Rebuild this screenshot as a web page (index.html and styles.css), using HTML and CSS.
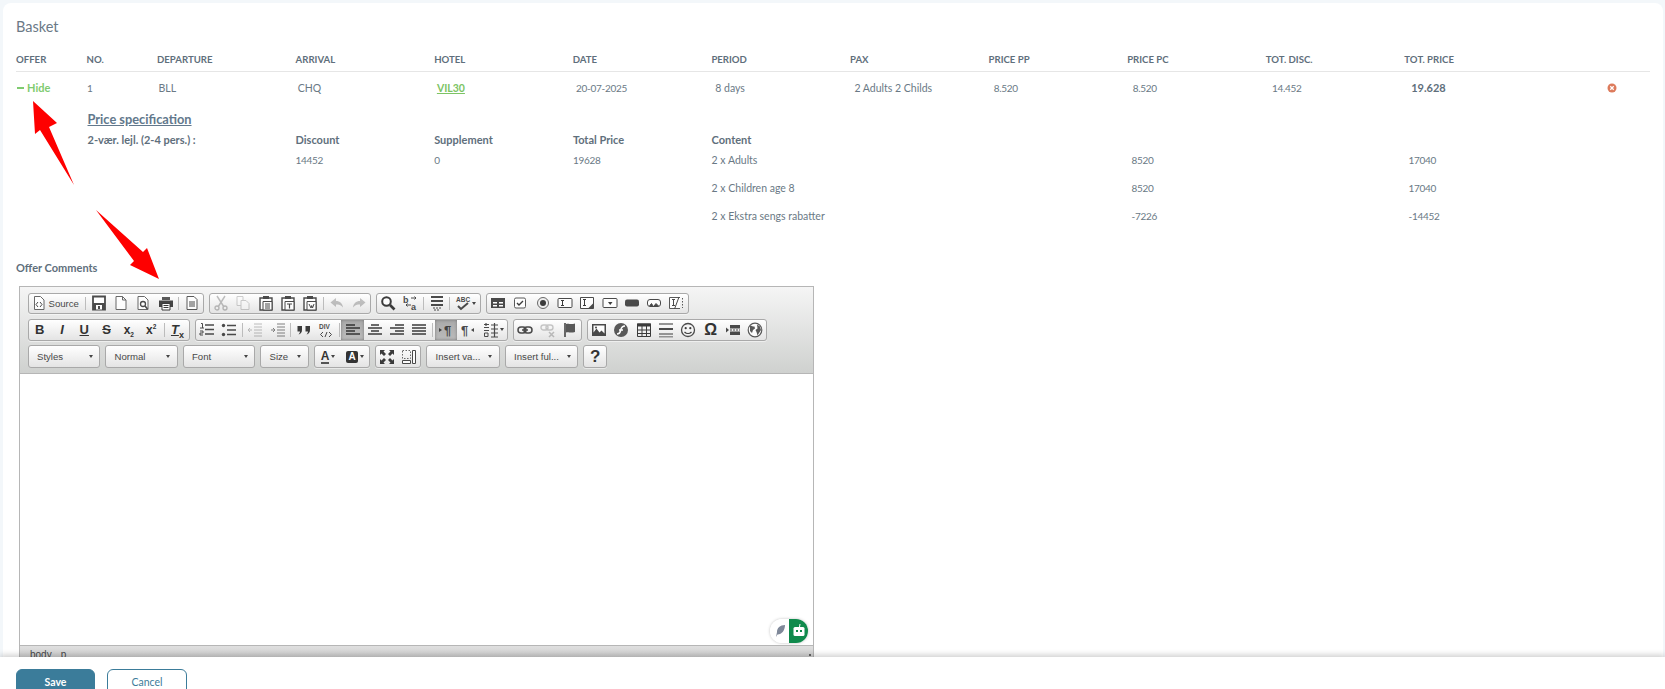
FILE: index.html
```html
<!DOCTYPE html>
<html lang="en">
<head>
  <meta charset="UTF-8" />
  <title>Basket</title>
  <link rel="stylesheet" href="styles.css">
</head>
<body>

  <!-- Icon set for the editor toolbar -->
  <svg class="sprite" xmlns="http://www.w3.org/2000/svg">
    <symbol id="i-source" viewBox="0 0 16 16"><path d="M3.5 1.5h6l3.5 3.5v9.5h-9.5z" fill="#fff" stroke="#555"/><path d="M7 7 5 9.5l2 2.5M9 7l2 2.5L9 12" fill="none" stroke="#333"/></symbol>
    <symbol id="i-save" viewBox="0 0 16 16"><path d="M2 1.5h12v13H2z" fill="#fff" stroke="#333" stroke-width="1.8"/><path d="M2 8h12v6.5H2z" fill="#333"/><path d="M5 10h6v4.5H5z" fill="#fff"/><path d="M7 11h2v3H7z" fill="#333"/></symbol>
    <symbol id="i-new" viewBox="0 0 16 16"><path d="M3 1.5h6.5l3.5 3.5v9.5H3zM9.5 1.5V5H13" fill="#fff" stroke="#555"/></symbol>
    <symbol id="i-preview" viewBox="0 0 16 16"><path d="M3 1.5h6.5L13 5v9.5H3z" fill="#fff" stroke="#555"/><circle cx="8" cy="9" r="2.5" fill="#fff" stroke="#333" stroke-width="1.3"/><path d="m10 11 2.5 3" stroke="#333" stroke-width="1.6"/></symbol>
    <symbol id="i-print" viewBox="0 0 16 16"><path d="M4 2h8v3H4z" fill="#444"/><path d="M1 5.5h14V12H1z" fill="#2c2c2c"/><path d="M4 8.5h8V15H4z" fill="#fff" stroke="#222"/><path d="M5.5 10.5h5M5.5 12.5h5" stroke="#222"/></symbol>
    <symbol id="i-templates" viewBox="0 0 16 16"><path d="M3 1.5h7l3 3v10H3z" fill="#fff" stroke="#444"/><path d="M5 7h6M5 9h6M5 11h6" stroke="#333"/></symbol>
    <symbol id="i-cut" viewBox="0 0 16 16"><path d="M4 1l7 11M12 1 5 12" stroke="#333" stroke-width="1.4"/><circle cx="4" cy="13" r="2" fill="none" stroke="#333" stroke-width="1.3"/><circle cx="12" cy="13" r="2" fill="none" stroke="#333" stroke-width="1.3"/></symbol>
    <symbol id="i-copy" viewBox="0 0 16 16"><path d="M2 1.5h6v9H2z" fill="#fff" stroke="#666"/><path d="M6 5.5h5l3 3v6H6z" fill="#fff" stroke="#666"/></symbol>
    <symbol id="i-paste" viewBox="0 0 16 16"><path d="M2 3h12v12H2z" fill="#fff" stroke="#333" stroke-width="1.4"/><path d="M5 1h6v3H5z" fill="#333"/><path d="M5 6.5h9V15H5z" fill="#fff" stroke="#333"/><path d="M7 9h5M7 11h5M7 13h5" stroke="#333"/></symbol>
    <symbol id="i-pastetext" viewBox="0 0 16 16"><path d="M2 3h12v12H2z" fill="#fff" stroke="#333" stroke-width="1.4"/><path d="M5 1h6v3H5z" fill="#333"/><path d="M5 6.5h9V15H5z" fill="#fff" stroke="#333"/><path d="M7 9h5M9.5 9v4.5" stroke="#333" stroke-width="1.2"/></symbol>
    <symbol id="i-pasteword" viewBox="0 0 16 16"><path d="M2 3h12v12H2z" fill="#fff" stroke="#333" stroke-width="1.4"/><path d="M5 1h6v3H5z" fill="#333"/><path d="M5 6.5h9V15H5z" fill="#fff" stroke="#333"/><path d="m7 9 2 4 .7-2.5.8 2.5 1.5-4" fill="none" stroke="#333"/></symbol>
    <symbol id="i-undo" viewBox="0 0 16 16"><path d="M7 3 1.5 7.5 7 12V9.5c3 0 5 .5 7 3-.5-4-3-6.5-7-6.5z" fill="#444"/></symbol>
    <symbol id="i-redo" viewBox="0 0 16 16"><path d="M9 3l5.5 4.5L9 12V9.5c-3 0-5 .5-7 3 .5-4 3-6.5 7-6.5z" fill="#444"/></symbol>
    <symbol id="i-find" viewBox="0 0 16 16"><circle cx="6.5" cy="6.5" r="4.3" fill="#fff" stroke="#222" stroke-width="2"/><path d="m10 10 4.5 4.5" stroke="#222" stroke-width="2.6"/></symbol>
    <symbol id="i-replace" viewBox="0 0 16 16"><text x="0" y="8" class="ico-txt">b</text><text x="8" y="15" class="ico-txt">a</text><path d="M8 3h5l-1.5-1.5M13 3l-1.5 1.5M8 10H3l1.5-1.5M3 10l1.5 1.5" fill="none" stroke="#333"/></symbol>
    <symbol id="i-selectall" viewBox="0 0 16 16"><path d="M2 1h12v2H2zM2 5h12v2H2zM2 9h12v2H2z" fill="#333"/><path d="M4 13h8M5 15h6" stroke="#333" stroke-dasharray="2 1"/></symbol>
    <symbol id="i-spell" viewBox="0 0 16 16"><text x="1" y="7" class="ico-txt-s">ABC</text><path d="m3 11 3 3 7-6" fill="none" stroke="#333" stroke-width="2"/></symbol>
    <symbol id="i-form" viewBox="0 0 16 16"><path d="M1 3h14v10H1z" fill="#333"/><path d="M3 7h4v1.5H3zM9 7h4v1.5H9zM3 10h4v1.5H3zM9 10h4v1.5H9z" fill="#fff"/></symbol>
    <symbol id="i-checkbox" viewBox="0 0 16 16"><rect x="2.5" y="3" width="11" height="10" rx="1.5" fill="#fff" stroke="#444"/><path d="m5 8 2 2 4-4" fill="none" stroke="#222" stroke-width="1.4"/></symbol>
    <symbol id="i-radio" viewBox="0 0 16 16"><circle cx="8" cy="8" r="5.5" fill="#eee" stroke="#555"/><circle cx="8" cy="8" r="3" fill="#222"/></symbol>
    <symbol id="i-textfield" viewBox="0 0 16 16"><rect x="1" y="3.5" width="14" height="9" rx="1" fill="#fff" stroke="#333"/><path d="M4 5.5h3M4 10.5h3M5.5 5.5v5" stroke="#222"/></symbol>
    <symbol id="i-textarea" viewBox="0 0 16 16"><path d="M1.5 2.5h13v11h-13z" fill="#fff" stroke="#333"/><path d="M4 4.5h3M4 10.5h3M5.5 4.5v6" stroke="#222"/><path d="m9 13.5 5.5-5.5v5.5z" fill="#333"/></symbol>
    <symbol id="i-select" viewBox="0 0 16 16"><rect x="1" y="3.5" width="14" height="9" rx="1" fill="#fff" stroke="#333"/><path d="M6 7h4.5l-2.250 3z" fill="#222"/></symbol>
    <symbol id="i-button" viewBox="0 0 16 16"><rect x="1" y="4.5" width="14" height="7" rx="2" fill="#333"/></symbol>
    <symbol id="i-imgbutton" viewBox="0 0 16 16"><rect x="1.5" y="4.5" width="13" height="7" rx="2.5" fill="#fff" stroke="#333"/><path d="M3.5 11 5.5 8.5 7 11M8 11l2-2.5 2.5 2.5" fill="#333" stroke="#333"/></symbol>
    <symbol id="i-hidden" viewBox="0 0 16 16"><path d="M12 2.5H1.5v11H12" fill="#fff" stroke="#444"/><path d="M4 4.5h3M4 10.5h3M5.5 4.5v6M11 2 6.5 14" fill="none" stroke="#333"/><path d="M14.5 3v10" stroke="#444" stroke-dasharray="1.5 1.5"/></symbol>
    <symbol id="i-ol" viewBox="0 0 16 16"><path d="M6 3h9M6 7.5h9M6 12h9" stroke="#333" stroke-width="1.5"/><path d="M2 1.5h1.5V6M1 6h4M1 9h3v2H1v2h3" fill="none" stroke="#333"/></symbol>
    <symbol id="i-ul" viewBox="0 0 16 16"><path d="M6 3.5h9M6 8h9M6 12.5h9" stroke="#333" stroke-width="1.5"/><circle cx="2.5" cy="3.5" r="1.7" fill="#333"/><circle cx="2.5" cy="12.5" r="1.7" fill="#333"/></symbol>
    <symbol id="i-outdent" viewBox="0 0 16 16"><path d="M7 2h8M7 5h8M7 8h8M7 11h8M7 14h8" stroke="#333"/><path d="M1 8h4M3 6 1 8l2 2" fill="none" stroke="#333"/></symbol>
    <symbol id="i-indent" viewBox="0 0 16 16"><path d="M7 2h8M7 5h8M7 8h8M7 11h8M7 14h8" stroke="#333"/><path d="M1 8h4M3 6l2 2-2 2" fill="none" stroke="#333"/></symbol>
    <symbol id="i-quote" viewBox="0 0 16 16"><path d="M1.5 4H6v4c0 2.5-1.5 4-3.500 4.500 1-1 1.500-2 1.500-3H1.500zM9.500 4H14v4c0 2.500-1.500 4-3.500 4.500 1-1 1.500-2 1.500-3H9.500z" fill="#222"/></symbol>
    <symbol id="i-div" viewBox="0 0 16 16"><text x="1" y="7" class="ico-txt-s">DIV</text><path d="M5 10 2.5 12.5 5 15M11 10l2.5 2.5L11 15M9 10l-2 5" fill="none" stroke="#333"/></symbol>
    <symbol id="i-left" viewBox="0 0 16 16"><path d="M1 3h9M1 6h14M1 9h9M1 12h14" stroke="#222" stroke-width="1.5"/></symbol>
    <symbol id="i-center" viewBox="0 0 16 16"><path d="M4 3h8M1 6h14M4 9h8M1 12h14" stroke="#222" stroke-width="1.5"/></symbol>
    <symbol id="i-right" viewBox="0 0 16 16"><path d="M6 3h9M1 6h14M6 9h9M1 12h14" stroke="#222" stroke-width="1.5"/></symbol>
    <symbol id="i-justify" viewBox="0 0 16 16"><path d="M1 3h14M1 6h14M1 9h14M1 12h14" stroke="#222" stroke-width="1.5"/></symbol>
    <symbol id="i-ltr" viewBox="0 0 16 16"><path d="M1 6v4l3-2z" fill="#333"/><text x="6" y="13" class="ico-txt-b">¶</text></symbol>
    <symbol id="i-rtl" viewBox="0 0 16 16"><text x="1" y="13" class="ico-txt-b">¶</text><path d="M14 6v4l-3-2z" fill="#333"/></symbol>
    <symbol id="i-lang" viewBox="0 0 16 16"><path d="M1 2.5h5M1 5.5h5M1 8.5h5M3 1v3M8 3h7M11.5 1v14M8 7h7M8 11h7M8 15h7" stroke="#333" stroke-width="1.2"/><path d="M1.5 11H5v3.500H1.500z" fill="none" stroke="#333"/></symbol>
    <symbol id="i-link" viewBox="0 0 16 16"><rect x="1" y="5" width="8" height="6" rx="3" fill="none" stroke="#333" stroke-width="1.5"/><rect x="7" y="5" width="8" height="6" rx="3" fill="none" stroke="#333" stroke-width="1.5"/><path d="M5 8h6" stroke="#333" stroke-width="1.5"/></symbol>
    <symbol id="i-unlink" viewBox="0 0 16 16"><rect x="1" y="3" width="7" height="5" rx="2.5" fill="none" stroke="#555" stroke-width="1.4"/><rect x="6" y="3" width="7" height="5" rx="2.5" fill="none" stroke="#555" stroke-width="1.4"/><path d="m9 10 5 5M14 10l-5 5" stroke="#444" stroke-width="1.5"/></symbol>
    <symbol id="i-anchor" viewBox="0 0 16 16"><path d="M3 1v14" stroke="#444" stroke-width="1.8"/><path d="M4 2c3-1 4 1 9-.5V10c-5 1.5-6-.5-9 .5z" fill="#444"/></symbol>
    <symbol id="i-image" viewBox="0 0 16 16"><path d="M1 2h14v12H1z" fill="#333"/><path d="M2.5 3.5h11v8l-3-3-2 2-3-4-3 4z" fill="#fff"/><circle cx="5" cy="5.5" r="1" fill="#333"/></symbol>
    <symbol id="i-flash" viewBox="0 0 16 16"><circle cx="8" cy="8" r="7" fill="#444"/><path d="M12 4C8 4 8 7 7.5 9 7 11 6 12 4 12M6 8h4" fill="none" stroke="#fff" stroke-width="1.5"/></symbol>
    <symbol id="i-table" viewBox="0 0 16 16"><path d="M1 1.5h14v3H1z" fill="#222"/><path d="M1.5 2h13v12.5h-13zM6 4v10.5M10.5 4v10.5M1.5 8h13M1.5 11.5h13" fill="none" stroke="#222"/></symbol>
    <symbol id="i-hr" viewBox="0 0 16 16"><path d="M1 1h14v2H1zM1 11h14v2H1zM1 14h14v1.5H1z" fill="#888"/><path d="M1 6h14v2H1z" fill="#333"/></symbol>
    <symbol id="i-smiley" viewBox="0 0 16 16"><circle cx="8" cy="8" r="6.5" fill="#f4f4f4" stroke="#333" stroke-width="1.3"/><circle cx="5.7" cy="6.2" r="1.1" fill="#222"/><circle cx="10.3" cy="6.2" r="1.1" fill="#222"/><path d="M4.5 10c2 2 5 2 7 0" fill="none" stroke="#222" stroke-width="1.2"/></symbol>
    <symbol id="i-pagebreak" viewBox="0 0 16 16"><path d="M1 5.5v5L4 8z" fill="#333"/><path d="M5 3h10v3.5H5zM5 9.5h10V13H5z" fill="#333"/><path d="M5 8h10" stroke="#333" stroke-dasharray="2 1"/></symbol>
    <symbol id="i-iframe" viewBox="0 0 16 16"><circle cx="8" cy="8" r="6.8" fill="#fff" stroke="#444" stroke-width="1.2"/><path d="M3 3.5c2 .5 3 1 4.5 1l.5 2-2 1.5-1 3-2-2zM10 2.5l3 2 1 3.5-2 3-1.5 2.5-1-3.5-1-2 2-1.5z" fill="#444"/></symbol>
    <symbol id="i-max" viewBox="0 0 16 16"><path d="M1 1h5L4.5 2.5 7 5 5 7 2.5 4.5 1 6zM15 1v5l-1.5-1.5L11 7 9 5l2.5-2.5L10 1zM1 15v-5l1.5 1.5L5 9l2 2-2.5 2.5L6 15zM15 15h-5l1.5-1.5L9 11l2-2 2.5 2.5L15 10z" fill="#222"/></symbol>
    <symbol id="i-blocks" viewBox="0 0 16 16"><path d="M1.5 1.5h8v8h-8z" fill="none" stroke="#555" stroke-dasharray="1.5 1.5"/><path d="M11.5 1.5h3v13h-3zM1.5 11.5h8v3h-8z" fill="#fff" stroke="#333"/></symbol>
    <symbol id="i-close" viewBox="0 0 10 10"><circle cx="5" cy="5" r="4.5" fill="#dd7b5c"/><path d="m3.3 3.3 3.4 3.4M6.7 3.3 3.3 6.7" stroke="#fff" stroke-width="1.3"/></symbol>
  </svg>

  <main class="pagina">
    <section class="card">
      <h2 class="titulo">Basket</h2>

      <div class="fila-head">
        <div>OFFER</div><div>NO.</div><div>DEPARTURE</div><div>ARRIVAL</div><div>HOTEL</div><div>DATE</div>
        <div>PERIOD</div><div>PAX</div><div>PRICE PP</div><div>PRICE PC</div><div>TOT. DISC.</div><div>TOT. PRICE</div>
      </div>

      <div class="fila-dato">
        <div class="hide"><span class="menos"></span>Hide</div>
        <div class="num">1</div><div>BLL</div><div>CHQ</div>
        <div><a class="hotel" href="#">VIL30</a></div>
        <div class="num">20-07-2025</div><div>8 days</div><div>2 Adults 2 Childs</div><div class="num">8.520</div><div class="num">8.520</div><div class="num">14.452</div>
        <div class="total">19.628</div>
        <div class="quitar"><svg class="ico-close"><use href="#i-close"/></svg></div>
      </div>

      <!-- Detalle del precio -->
      <div class="spec">
        <h3 class="spec-titulo">Price specification</h3>
        <div class="spec-fila spec-head">
          <div>2-vær. lejl. (2-4 pers.) :</div><div>Discount</div><div>Supplement</div><div>Total Price</div><div>Content</div><div></div><div></div>
        </div>
        <div class="spec-fila">
          <div></div><div class="num">14452</div><div class="num">0</div><div class="num">19628</div><div>2 x Adults</div><div class="num">8520</div><div class="num">17040</div>
        </div>
        <div class="spec-fila spec-alta">
          <div></div><div></div><div></div><div></div><div>2 x Children age 8</div><div class="num">8520</div><div class="num">17040</div>
        </div>
        <div class="spec-fila">
          <div></div><div></div><div></div><div></div><div>2 x Ekstra sengs rabatter</div><div class="num">-7226</div><div class="num">-14452</div>
        </div>
      </div>

      <label class="comentarios">Offer Comments</label>

      <!-- Editor -->
      <div class="editor">
        <div class="toolbar">
          <div class="tb-fila">
            <div class="grupo">
              <span class="btn btn-source"><svg class="ico"><use href="#i-source"/></svg><span>Source</span></span>
              <i class="sep"></i>
              <span class="btn"><svg class="ico"><use href="#i-save"/></svg></span>
              <span class="btn"><svg class="ico"><use href="#i-new"/></svg></span>
              <span class="btn"><svg class="ico"><use href="#i-preview"/></svg></span>
              <span class="btn"><svg class="ico"><use href="#i-print"/></svg></span>
              <i class="sep"></i>
              <span class="btn"><svg class="ico"><use href="#i-templates"/></svg></span>
            </div>
            <div class="grupo">
              <span class="btn off"><svg class="ico"><use href="#i-cut"/></svg></span>
              <span class="btn off"><svg class="ico"><use href="#i-copy"/></svg></span>
              <span class="btn"><svg class="ico"><use href="#i-paste"/></svg></span>
              <span class="btn"><svg class="ico"><use href="#i-pastetext"/></svg></span>
              <span class="btn"><svg class="ico"><use href="#i-pasteword"/></svg></span>
              <i class="sep"></i>
              <span class="btn off"><svg class="ico"><use href="#i-undo"/></svg></span>
              <span class="btn off"><svg class="ico"><use href="#i-redo"/></svg></span>
            </div>
            <div class="grupo">
              <span class="btn"><svg class="ico"><use href="#i-find"/></svg></span>
              <span class="btn"><svg class="ico"><use href="#i-replace"/></svg></span>
              <i class="sep"></i>
              <span class="btn"><svg class="ico"><use href="#i-selectall"/></svg></span>
              <i class="sep"></i>
              <span class="btn btn-menu"><svg class="ico"><use href="#i-spell"/></svg><b class="flecha"></b></span>
            </div>
            <div class="grupo">
              <span class="btn"><svg class="ico"><use href="#i-form"/></svg></span>
              <span class="btn"><svg class="ico"><use href="#i-checkbox"/></svg></span>
              <span class="btn"><svg class="ico"><use href="#i-radio"/></svg></span>
              <span class="btn"><svg class="ico"><use href="#i-textfield"/></svg></span>
              <span class="btn"><svg class="ico"><use href="#i-textarea"/></svg></span>
              <span class="btn"><svg class="ico"><use href="#i-select"/></svg></span>
              <span class="btn"><svg class="ico"><use href="#i-button"/></svg></span>
              <span class="btn"><svg class="ico"><use href="#i-imgbutton"/></svg></span>
              <span class="btn"><svg class="ico"><use href="#i-hidden"/></svg></span>
            </div>
          </div>

          <div class="tb-fila">
            <div class="grupo">
              <span class="btn txt"><b>B</b></span>
              <span class="btn txt"><b><em>I</em></b></span>
              <span class="btn txt"><b><u>U</u></b></span>
              <span class="btn txt"><b><s>S</s></b></span>
              <span class="btn txt-sm"><b>x<sub>2</sub></b></span>
              <span class="btn txt-sm"><b>x<sup>2</sup></b></span>
              <i class="sep"></i>
              <span class="btn txt"><b><em><u>T</u></em><sub class="mini">x</sub></b></span>
            </div>
            <div class="grupo">
              <span class="btn"><svg class="ico"><use href="#i-ol"/></svg></span>
              <span class="btn"><svg class="ico"><use href="#i-ul"/></svg></span>
              <i class="sep"></i>
              <span class="btn off"><svg class="ico"><use href="#i-outdent"/></svg></span>
              <span class="btn medio"><svg class="ico"><use href="#i-indent"/></svg></span>
              <i class="sep"></i>
              <span class="btn"><svg class="ico"><use href="#i-quote"/></svg></span>
              <span class="btn"><svg class="ico"><use href="#i-div"/></svg></span>
              <i class="sep"></i>
              <span class="btn activo"><svg class="ico"><use href="#i-left"/></svg></span>
              <span class="btn"><svg class="ico"><use href="#i-center"/></svg></span>
              <span class="btn"><svg class="ico"><use href="#i-right"/></svg></span>
              <span class="btn"><svg class="ico"><use href="#i-justify"/></svg></span>
              <i class="sep"></i>
              <span class="btn activo"><svg class="ico"><use href="#i-ltr"/></svg></span>
              <span class="btn"><svg class="ico"><use href="#i-rtl"/></svg></span>
              <span class="btn btn-menu"><svg class="ico"><use href="#i-lang"/></svg><b class="flecha"></b></span>
            </div>
            <div class="grupo">
              <span class="btn"><svg class="ico"><use href="#i-link"/></svg></span>
              <span class="btn off"><svg class="ico"><use href="#i-unlink"/></svg></span>
              <span class="btn"><svg class="ico"><use href="#i-anchor"/></svg></span>
            </div>
            <div class="grupo">
              <span class="btn"><svg class="ico"><use href="#i-image"/></svg></span>
              <span class="btn"><svg class="ico"><use href="#i-flash"/></svg></span>
              <span class="btn"><svg class="ico"><use href="#i-table"/></svg></span>
              <span class="btn"><svg class="ico"><use href="#i-hr"/></svg></span>
              <span class="btn"><svg class="ico"><use href="#i-smiley"/></svg></span>
              <span class="btn txt-omega"><b>Ω</b></span>
              <span class="btn"><svg class="ico"><use href="#i-pagebreak"/></svg></span>
              <span class="btn"><svg class="ico"><use href="#i-iframe"/></svg></span>
            </div>
          </div>

          <div class="tb-fila tb-combos">
            <div class="combo c-72"><span>Styles</span><b class="flecha"></b></div>
            <div class="combo c-72"><span>Normal</span><b class="flecha"></b></div>
            <div class="combo c-72"><span>Font</span><b class="flecha"></b></div>
            <div class="combo c-48"><span>Size</span><b class="flecha"></b></div>
            <div class="grupo">
              <span class="btn btn-color"><span class="letra-a">A</span><b class="flecha"></b></span>
              <span class="btn btn-color"><span class="letra-fondo">A</span><b class="flecha"></b></span>
            </div>
            <div class="grupo">
              <span class="btn"><svg class="ico"><use href="#i-max"/></svg></span>
              <span class="btn"><svg class="ico"><use href="#i-blocks"/></svg></span>
            </div>
            <div class="combo c-73"><span>Insert va...</span><b class="flecha"></b></div>
            <div class="combo c-73"><span>Insert ful...</span><b class="flecha"></b></div>
            <div class="grupo"><span class="btn btn-help">?</span></div>
          </div>
        </div>

        <div class="area">
          <div class="widget">
            <span class="widget-pluma">
              <svg width="12" height="14" viewBox="0 0 12 14"><path d="M11 1C6 1 3 4 3 8L2 13l1.5-2.5C8 10.5 11 6 11 1z" fill="#7f8899"/></svg>
            </span>
            <span class="widget-bot">
              <svg width="14" height="16" viewBox="0 0 14 16"><path d="M8 1 7.5 4" stroke="#fff"/><rect x="1.5" y="4" width="11" height="9" rx="1.5" fill="#fff"/><rect x="4" y="7" width="2" height="2" fill="#0f8a4c"/><rect x="8" y="7" width="2" height="2" fill="#0f8a4c"/></svg>
            </span>
          </div>
        </div>
        <div class="estado"><span>body</span><span>p</span><i class="agarre"></i></div>
      </div>
    </section>

    <!-- Flechas rojas de la captura -->
    <svg class="flechas" viewBox="0 0 200 300">
      <polygon points="33,101 57,123 49,127 74,185 40,130 35,134" fill="#fe0000"/>
      <polygon points="96,210 143,252 147,248 159,279 130,265 134,261" fill="#fe0000"/>
    </svg>
  </main>

  <footer class="pie">
    <button class="boton boton-save">Save</button>
    <button class="boton boton-cancel">Cancel</button>
  </footer>

</body>
</html>
```

FILE: styles.css
```css
html, body {
  height: 100%;
  margin: 0;
}

body {
  display: flex;
  flex-direction: column;
  overflow: hidden;
  background-color: #f3f7fa;
  font-family: Lato, "Open Sans", sans-serif;
  color: #6a7985;
}

.sprite {
  display: none;
}

.ico-txt {
  font: bold 9px "Liberation Sans", sans-serif;
  fill: #333;
}

.ico-txt-s {
  font: bold 6.5px "Liberation Sans", sans-serif;
  fill: #333;
}

.ico-txt-b {
  font: bold 13px "Liberation Sans", sans-serif;
  fill: #333;
}

.pagina {
  position: relative;
  flex: 1;
  min-height: 0;
  overflow: hidden;
  padding: 3px 2px 0 3px;
}

.card {
  height: 100%;
  padding: 14px 13px 0;
  box-sizing: border-box;
  background-color: #fff;
  border-radius: 8px 8px 0 0;
}

.titulo {
  margin: 0 0 11px;
  font-size: 14.5px;
  font-weight: 400;
  line-height: 20px;
  color: #6b7986;
}

/* Tabla */
.fila-head {
  display: grid;
  grid-template-columns: 70.5px 70.5px repeat(10, 138.6px);
  height: 23px;
  line-height: 23px;
  border-bottom: 1px solid #e6e6e6;
  font-size: 9.6px;
  font-weight: 700;
  color: #5f6f7c;
}

.fila-dato {
  display: grid;
  grid-template-columns: 71px 71.5px repeat(10, 139.2px) 1fr;
  height: 32px;
  line-height: 32px;
  font-size: 10.5px;
}

.num {
  font-size: 10px;
  letter-spacing: -0.3px;
}

.hide {
  display: flex;
  align-items: center;
  font-size: 11px;
  font-weight: 700;
  color: #7fcb70;
}

.menos {
  width: 7px;
  height: 2px;
  margin: 0 3px 0 1px;
  background-color: #7fcb70;
}

.hotel {
  font-size: 10.5px;
  font-weight: 700;
  color: #7cc464;
}

.total {
  font-size: 11px;
  font-weight: 700;
  color: #5f6f7c;
}

.quitar {
  display: flex;
  align-items: center;
  padding-left: 57px;
}

.ico-close {
  width: 10px;
  height: 10px;
}

/* Detalle */
.spec {
  margin: 5px 0 0 71.5px;
}

.spec-titulo {
  margin: 0 0 1px;
  font-size: 12.8px;
  font-weight: 700;
  line-height: 20px;
  text-decoration: underline;
  color: #62788c;
}

.spec-fila {
  display: grid;
  grid-template-columns: 208px repeat(3, 138.7px) 420px 277px 1fr;
  font-size: 10.5px;
  line-height: 20px;
}

.spec-head {
  font-size: 11px;
  font-weight: 700;
  color: #5f6f7c;
}

.spec-alta {
  margin: 8px 0;
}

.comentarios {
  display: block;
  margin: 33px 0 9px;
  font-size: 11px;
  font-weight: 700;
  line-height: 18px;
  color: #5f6f7c;
}

/* Editor */
.editor {
  width: 795px;
  margin-left: 3px;
  box-sizing: border-box;
  border: 1px solid #b6b6b6;
  font-family: "Liberation Sans", sans-serif;
}

.toolbar {
  padding: 5.5px 7.5px 4.5px;
  border-bottom: 1px solid #b6b6b6;
  background: linear-gradient(#f5f5f5, #cfd1cf);
}

.tb-fila {
  display: flex;
  gap: 5px;
  height: 21.5px;
  margin-bottom: 4.5px;
}

.tb-fila + .tb-fila {
  height: 22px;
}

.tb-combos.tb-combos {
  height: 23px;
  margin-bottom: 0;
}

.grupo {
  display: flex;
  align-items: stretch;
  border: 1px solid #a9a9a9;
  border-radius: 3px;
  background: linear-gradient(#fff, #e4e4e4);
  box-shadow: 0 1px 0 rgba(255,255,255,.5);
}

.btn {
  display: flex;
  align-items: center;
  justify-content: center;
  width: 22.3px;
  flex-shrink: 0;
  color: #333;
}

.ico {
  width: 16px;
  height: 16px;
  opacity: 0.88;
}

.off .ico {
  opacity: 0.3;
}

.medio .ico {
  opacity: 0.6;
}

.activo {
  background: linear-gradient(#aaa, #bbb);
  box-shadow: inset 0 0 3px #777;
}

.sep {
  width: 1px;
  margin: 3px 1.5px;
  background-color: #bcbcbc;
}

.btn-source {
  width: 55px;
  justify-content: flex-start;
  padding-left: 2px;
  box-sizing: border-box;
  gap: 2px;
  font-size: 9.6px;
  color: #484848;
}

.btn-menu {
  width: 28px;
  gap: 1px;
}

.txt {
  font-size: 13px;
}

.txt-sm {
  font-size: 12px;
}

.txt sub,
.txt-sm sub,
.txt-sm sup {
  font-size: 6.5px;
  line-height: 0;
}

.txt .mini {
  font-size: 9px;
}

.txt-omega {
  font-size: 16px;
}

.flecha {
  width: 0;
  height: 0;
  flex-shrink: 0;
  border-left: 2.5px solid transparent;
  border-right: 2.5px solid transparent;
  border-top: 3px solid #444;
}

.combo {
  display: flex;
  align-items: center;
  justify-content: space-between;
  padding: 0 6.5px 0 8.5px;
  box-sizing: border-box;
  border: 1px solid #a9a9a9;
  border-radius: 3px;
  background: linear-gradient(#fff, #e4e4e4);
  font-size: 9.6px;
  white-space: nowrap;
  color: #484848;
}

.c-72 { width: 72.5px; }
.c-48 { width: 48.5px; }
.c-73 { width: 73.5px; }

.btn-color {
  width: 27px;
  gap: 2px;
}

.letra-a {
  border-bottom: 2px solid #555;
  font-size: 12px;
  font-weight: 700;
  line-height: 12px;
}

.letra-fondo {
  width: 12px;
  height: 12px;
  border-radius: 2px;
  background-color: #333;
  color: #fff;
  font-size: 10px;
  font-weight: 700;
  line-height: 12px;
  text-align: center;
}

.btn-help {
  font-size: 17px;
  font-weight: 700;
}

.area {
  position: relative;
  height: 271px;
  background-color: #fff;
}

.widget {
  position: absolute;
  right: 5px;
  bottom: 2px;
  display: flex;
  width: 38px;
  height: 24px;
  overflow: hidden;
  border-radius: 12px;
  box-shadow: 0 0 3px rgba(0,0,0,.25);
}

.widget-pluma,
.widget-bot {
  display: flex;
  align-items: center;
  justify-content: center;
  width: 19px;
}

.widget-pluma {
  background-color: #fff;
}

.widget-bot {
  background-color: #0f8a4c;
}

.estado {
  position: relative;
  display: flex;
  gap: 9px;
  height: 22px;
  padding: 3px 0 0 10px;
  border-top: 1px solid #b6b6b6;
  background: linear-gradient(#dfdfdf, #c2c2c2);
  box-sizing: border-box;
  font-size: 10px;
  color: #484848;
}

.agarre {
  position: absolute;
  right: 2px;
  top: 8px;
  width: 2px;
  height: 2px;
  background-color: #666;
}

/* Pie con botones */
.pie {
  position: relative;
  display: flex;
  gap: 12px;
  height: 32px;
  padding: 12px 0 0 16px;
  box-sizing: border-box;
  overflow: hidden;
  flex-shrink: 0;
  background-color: #fff;
  box-shadow: 0 -2px 6px rgba(0,0,0,.2);
}

.boton {
  width: 79px;
  height: 26px;
  flex-shrink: 0;
  padding: 0;
  border: 1px solid #3b7c9a;
  border-radius: 6px;
  font-family: Lato, "Open Sans", sans-serif;
  font-size: 10.5px;
}

.boton-save {
  background-color: #3b7c9a;
  color: #fff;
  font-weight: 700;
}

.boton-cancel {
  width: 80px;
  background-color: #fff;
  color: #3b7c9a;
}

.flechas {
  position: absolute;
  top: 0;
  left: 0;
  width: 200px;
  height: 300px;
  pointer-events: none;
}
```
